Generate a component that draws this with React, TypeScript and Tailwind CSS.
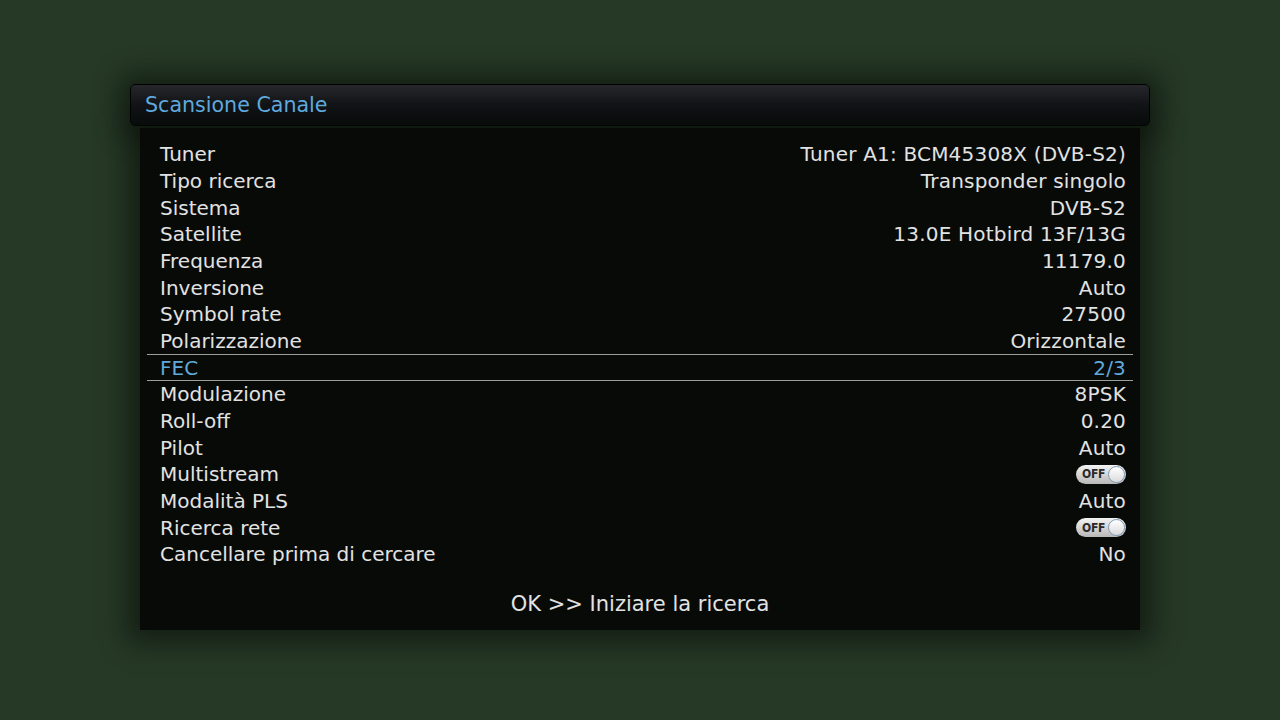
import React from "react";

type Row = {
  label: string;
  value?: string;
  toggle?: boolean;
  active?: boolean;
};

const rows: Row[] = [
  {label: "Tuner", value: "Tuner A1: BCM45308X (DVB-S2)"},
  {label: "Tipo ricerca", value: "Transponder singolo"},
  {label: "Sistema", value: "DVB-S2"},
  {label: "Satellite", value: "13.0E Hotbird 13F/13G"},
  {label: "Frequenza", value: "11179.0"},
  {label: "Inversione", value: "Auto"},
  {label: "Symbol rate", value: "27500"},
  {label: "Polarizzazione", value: "Orizzontale"},
  {label: "FEC", value: "2/3", active: true},
  {label: "Modulazione", value: "8PSK"},
  {label: "Roll-off", value: "0.20"},
  {label: "Pilot", value: "Auto"},
  {label: "Multistream", toggle: true},
  {label: "Modalità PLS", value: "Auto"},
  {label: "Ricerca rete", toggle: true},
  {label: "Cancellare prima di cercare", value: "No"},
];

const OffToggle = () => (
  <div className="flex h-[19px] w-[50px] items-center rounded-full bg-gradient-to-b from-[#f4f4f4] to-[#b8b8b8] pl-[6px] pr-[1px]">
    <span className="text-[12px] font-bold leading-none tracking-tight text-[#2a2a2a] [font-family:'DejaVu_Sans_Condensed','DejaVu_Sans',sans-serif]">
      OFF
    </span>
    <span className="ml-auto h-[17px] w-[17px] rounded-full border border-[#7d9bb5] bg-gradient-to-b from-[#ffffff] to-[#dcdcdc]" />
  </div>
);

const App = () => {
  return (
    <div className="h-[720px] w-[1280px] overflow-hidden bg-[#263826] pt-[84px] [font-family:'DejaVu_Sans',sans-serif]">
      <div className="mx-auto w-[1020px]">
        <div className="flex h-[42px] items-center rounded-[5px] border border-[#000000] bg-gradient-to-b from-[#26282c] via-[#131519] to-[#0a0c0e] px-[14px] shadow-[0_0_24px_10px_rgba(8,14,8,0.55)]">
          <span className="text-[20.6px] text-[#5fa9dc]">Scansione Canale</span>
        </div>
        <div className="mx-[10px] mt-[2px] flex h-[502px] flex-col bg-[#080a08] px-[7px] pt-[13px] shadow-[0_0_24px_12px_rgba(8,14,8,0.6)]">
          {rows.map((r) => (
            <div
              key={r.label}
              className={
                r.active
                  ? "flex h-[26.67px] items-center justify-between border-y border-[#9aa0a0] pl-[13px] pr-[7px] text-[20px] text-[#5fa9dc]"
                  : "flex h-[26.67px] items-center justify-between pl-[13px] pr-[7px] text-[20px] text-[#e2e2e2]"
              }
            >
              <span>{r.label}</span>
              {r.toggle ? <OffToggle /> : <span className="tracking-[0.2px]">{r.value}</span>}
            </div>
          ))}
          <div className="mt-[21px] text-center text-[21px] text-[#e2e2e2]">OK &gt;&gt; Iniziare la ricerca</div>
        </div>
      </div>
    </div>
  );
};

export default App;
